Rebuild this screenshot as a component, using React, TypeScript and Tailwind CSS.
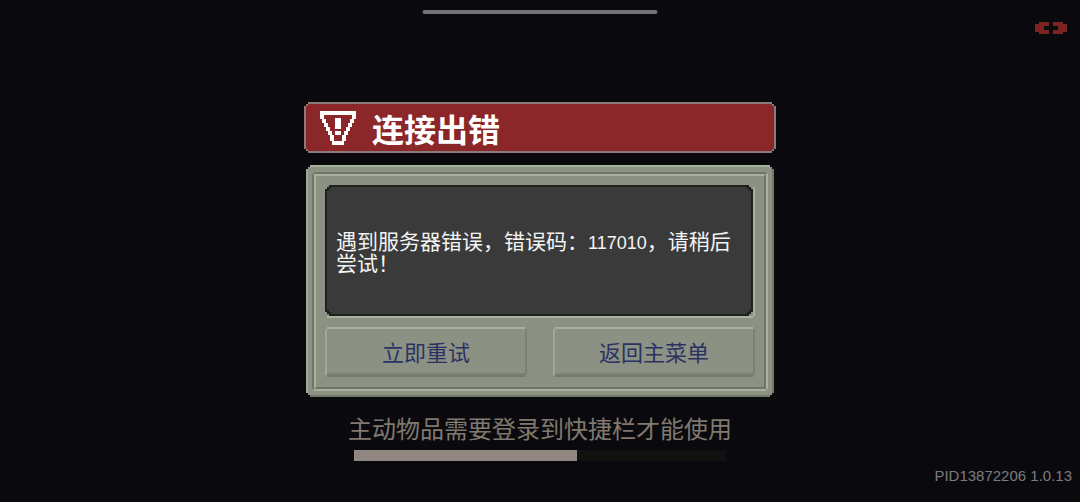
import type { ReactNode } from "react";

// Stepped corners, like a 2px pixel-art frame
const STEPPED =
  "[clip-path:polygon(0_4px,2px_4px,2px_2px,4px_2px,4px_0,calc(100%-4px)_0,calc(100%-4px)_2px,calc(100%-2px)_2px,calc(100%-2px)_4px,100%_4px,100%_calc(100%-4px),calc(100%-2px)_calc(100%-4px),calc(100%-2px)_calc(100%-2px),calc(100%-4px)_calc(100%-2px),calc(100%-4px)_100%,4px_100%,4px_calc(100%-2px),2px_calc(100%-2px),2px_calc(100%-4px),0_calc(100%-4px))]";
const NOTCHED =
  "[clip-path:polygon(0_2px,2px_2px,2px_0,calc(100%-2px)_0,calc(100%-2px)_2px,100%_2px,100%_calc(100%-2px),calc(100%-2px)_calc(100%-2px),calc(100%-2px)_100%,2px_100%,2px_calc(100%-2px),0_calc(100%-2px))]";

function WarningIcon() {
  return (
    <svg width="36" height="34" viewBox="0 0 36 34" fill="#fff" shapeRendering="crispEdges" aria-hidden="true">
      <path
        fillRule="evenodd"
        d="M0 0H36V8H34V12H32V16H30V20H28V24H26V30H24V34H12V30H10V24H8V20H6V16H4V12H2V8H0ZM4 4V8H6V12H8V16H10V20H12V24H14V30H22V24H24V20H26V16H28V12H30V8H32V4Z"
      />
      <path d="M15 7h6v11h-6zM15 20h6v4h-6z" />
    </svg>
  );
}

function LinkIcon() {
  return (
    <svg width="32" height="12" viewBox="0 0 32 12" fill="#7d2422" shapeRendering="crispEdges" aria-hidden="true">
      <path d="M4 0h10v4h-5v4h5v4h-10v-2h-4v-8h4z" />
      <path d="M18 0h10v2h4v8h-4v2h-10v-4h5v-4h-5z" />
    </svg>
  );
}

function PanelButton({ children }: { children: ReactNode }) {
  return (
    <button
      type="button"
      className={`h-[50px] flex-1 cursor-pointer border-2 border-t-[#a8b09e] border-r-[#7a8173] border-b-[#737a6c] border-l-[#a0a896] bg-[#8b9283] pb-[2px] text-[22px] leading-6 text-[#2c3163] shadow-[inset_0_-2px_0_#7b8274] ${NOTCHED}`}
    >
      {children}
    </button>
  );
}

export default function App() {
  return (
    <div className="relative flex min-h-screen flex-col items-center bg-[#0a0a0e] px-4 pt-[102px] font-['Noto_Sans_CJK_SC',sans-serif]">
      <div className="absolute top-[10px] left-1/2 h-1 w-[235px] -translate-x-1/2 rounded-full bg-[#737278]" />
      <div className="absolute top-[22px] right-[13px]">
        <LinkIcon />
      </div>

      {/* Title banner */}
      <header className={`w-full max-w-[472px] bg-[#8b7b79] p-[2px] ${STEPPED}`}>
        <div className={`flex h-[47px] items-center gap-4 bg-[#8b2629] px-[14px] ${NOTCHED}`}>
          <WarningIcon />
          <h1 className="text-[32px] leading-8 font-bold text-white">连接出错</h1>
        </div>
      </header>

      {/* Dialog panel */}
      <main
        className={`mt-3 w-full max-w-[468px] border-2 border-t-[#a8b09e] border-r-[#737a6c] border-b-[#737a6c] border-l-[#a0a896] bg-[#8b9283] p-1 pt-[5px] ${STEPPED}`}
      >
        <div className={`border-2 border-t-[#6f7668] border-r-[#a8b09e] border-b-[#a8b09e] border-l-[#6f7668] ${NOTCHED}`}>
          <div className="border-2 border-t-[#a8b09e] border-r-[#6f7668] border-b-[#6f7668] border-l-[#a8b09e] px-[9px] pt-[9px] pb-[10px]">
            <div className={`border-r-2 border-b-2 border-[#a8b09e] ${NOTCHED}`}>
              <div className={`bg-[#20211e] p-[2px] ${STEPPED}`}>
                <div className={`flex h-[127px] items-center bg-[#3a3a3a] px-[9px] ${STEPPED}`}>
                  <p className="text-[21px] leading-5 text-[#f4f4f4]">
                    遇到服务器错误，错误码：
                    <span className="font-['Liberation_Sans',sans-serif] text-[18px] leading-none">117010</span>
                    ，请稍后尝试！
                  </p>
                </div>
              </div>
            </div>
            <div className="mt-[9px] flex gap-[26px]">
              <PanelButton>立即重试</PanelButton>
              <PanelButton>返回主菜单</PanelButton>
            </div>
          </div>
        </div>
      </main>

      {/* Loading tip */}
      <label htmlFor="loading" className="mt-[19px] text-2xl leading-6 text-[#80796f]">
        主动物品需要登录到快捷栏才能使用
      </label>
      <progress
        id="loading"
        value={60}
        max={100}
        className="mt-[10px] h-[11px] w-full max-w-[372px] appearance-none [&::-webkit-progress-bar]:bg-[#11110f] [&::-webkit-progress-value]:bg-[#8f8780]"
      />

      <footer className="absolute right-2 bottom-4 font-['Liberation_Sans',sans-serif] text-[15px] leading-5 text-[#7c7c7c]">
        PID13872206 1.0.13
      </footer>
    </div>
  );
}
